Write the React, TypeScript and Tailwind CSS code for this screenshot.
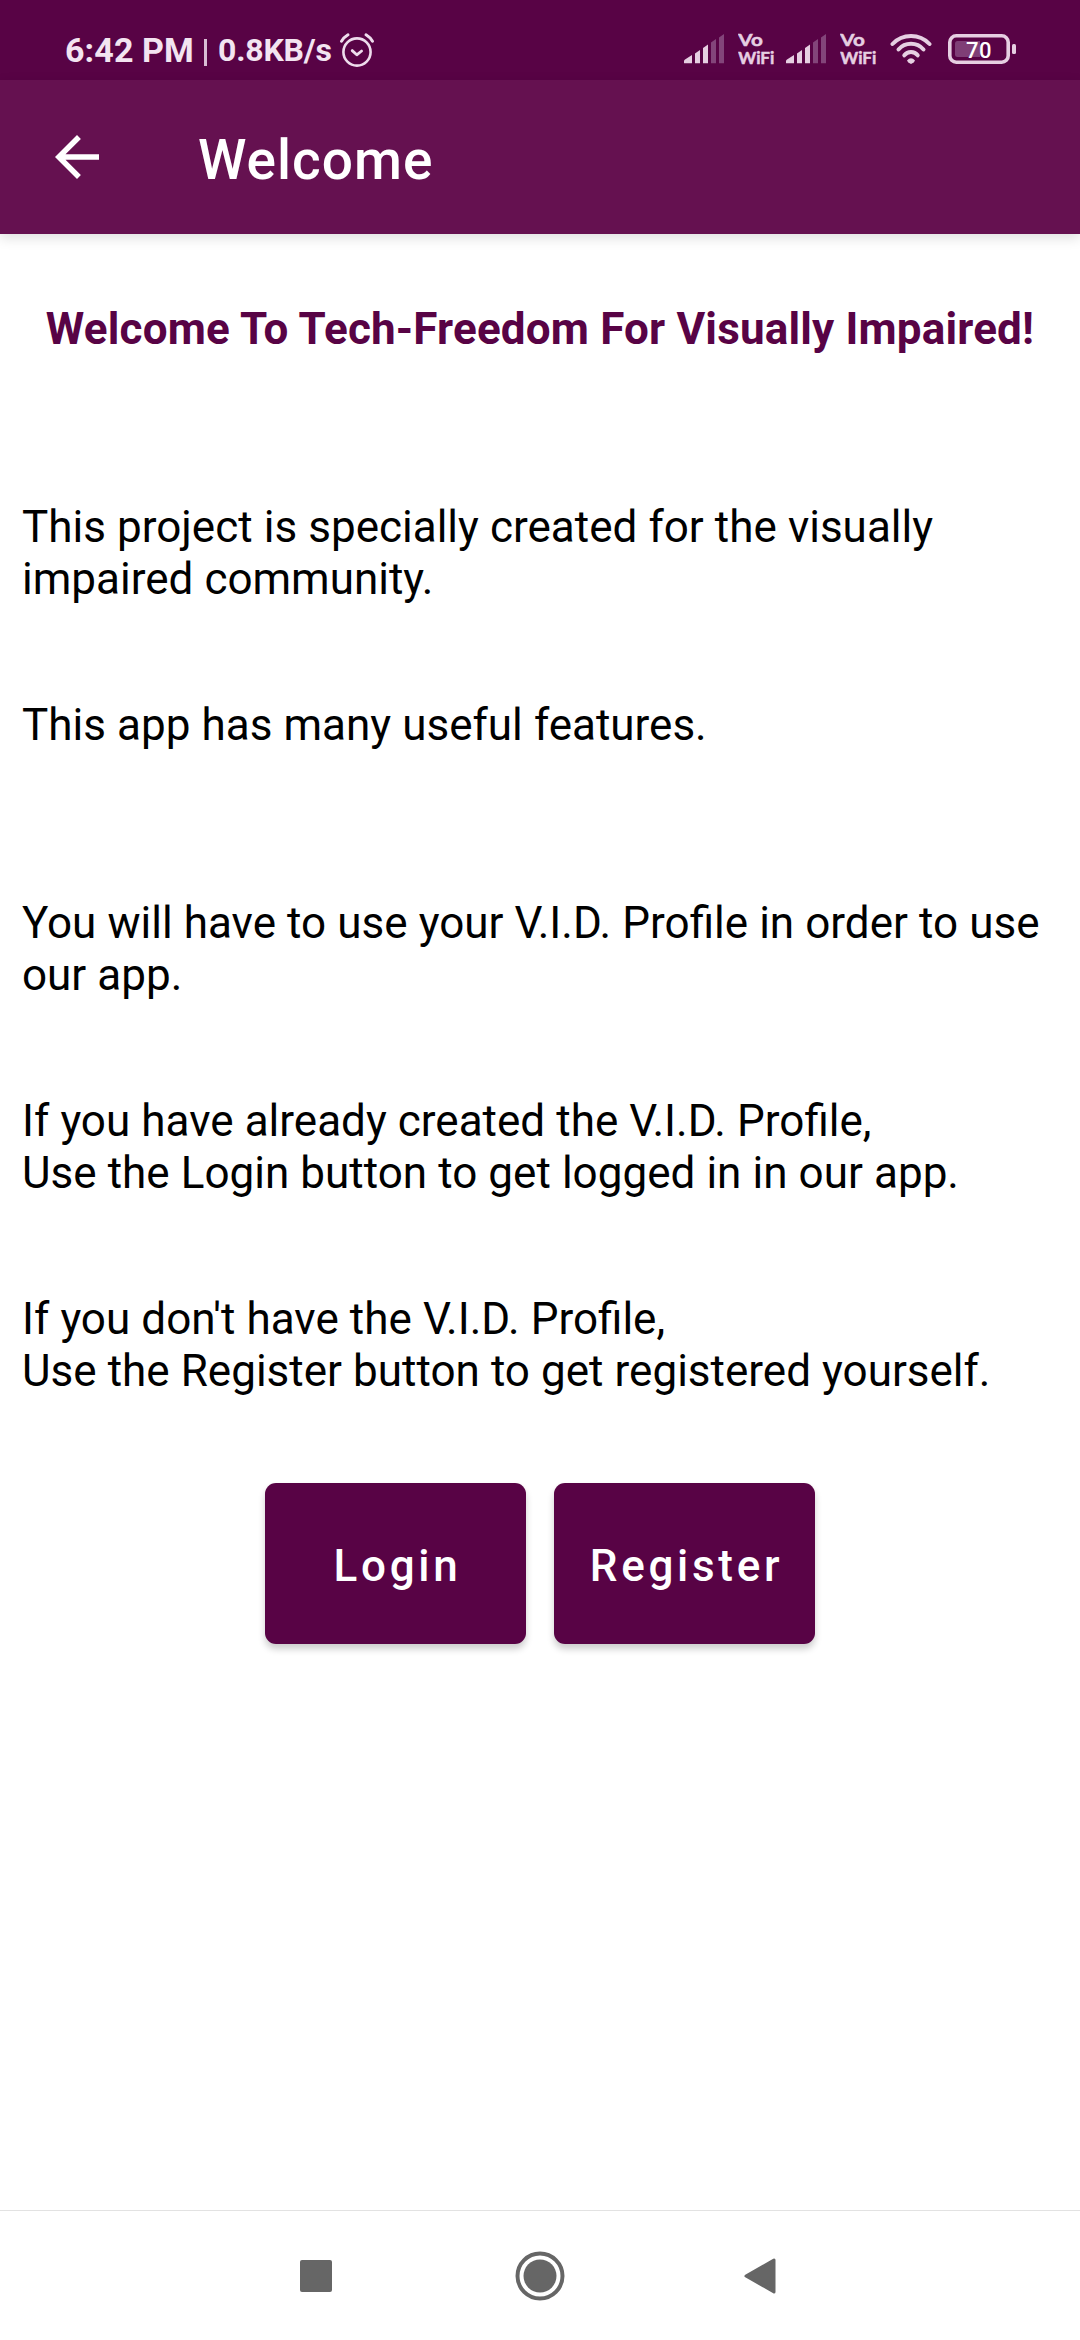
import { ReactNode } from "react";

const paragraphs: string[][] = [
  ["This project is specially created for the visually", "impaired community."],
  ["This app has many useful features."],
  ["You will have to use your V.I.D. Profile in order to use", "our app."],
  ["If you have already created the V.I.D. Profile,", "Use the Login button to get logged in in our app."],
  ["If you don't have the V.I.D. Profile,", "Use the Register button to get registered yourself."],
];

function AlarmIcon() {
  return (
    <svg width="36" height="36" viewBox="0 0 36 36" fill="none" stroke="#eedcec" strokeLinecap="round">
      <circle cx="18" cy="20" r="13.6" strokeWidth="2.6" />
      <path d="M13.2 18.6l4.6 4.2 4.8-3.8" strokeWidth="2.8" strokeLinejoin="round" />
      <path d="M2.5 9.2Q5 5.2 9 2.8M33.5 9.2Q31 5.2 27 2.8" strokeWidth="3" />
    </svg>
  );
}

function SignalIcon() {
  return (
    <svg width="40" height="30" viewBox="0 0 40 30" fill="#e6cfe2">
      <path d="M0 29v-2q0-1 1-1.6L8 21v8q0 .3-.6.3H.6Q0 29.3 0 29z" />
      <path d="M11 29.3V19.5l5-3.5v13.3h-5z" />
      <path d="M19 29.3V14l5-3.5v18.8h-5z" />
      <path d="M27 29.3V8.5L32 5v24.3h-5z" fill="#83457a" />
      <path d="M35 29.3V3.5L40 0v29.3h-5z" fill="#83457a" />
    </svg>
  );
}

function VoWifi() {
  return (
    <svg width="38" height="42" viewBox="0 -6 38 42" fill="#e6cfe2" stroke="#e6cfe2" strokeWidth="0.5" className="-mt-[6px] font-['Lato',sans-serif] font-bold">
      <text x="0.3" y="12.2" fontSize="17" textLength="24.5" lengthAdjust="spacingAndGlyphs">Vo</text>
      <text x="0.3" y="29.5" fontSize="17" textLength="36" lengthAdjust="spacingAndGlyphs">WiFi</text>
    </svg>
  );
}

function WifiIcon() {
  return (
    <svg width="42" height="30" viewBox="0 0 42 30" fill="none" stroke="#e6cfe2" strokeWidth="4" strokeLinecap="round">
      <path d="M2.5 10A25.4 25.4 0 0 1 39.5 10" />
      <path d="M8.5 15.5A16.5 16.5 0 0 1 33.5 15.5" />
      <path d="M14.3 21.3A8.5 8.5 0 0 1 27.7 21.3" />
      <path d="M17 26.5Q21 21.8 25 26.5Q24.5 28.5 21 30Q17.5 28.5 17 26.5z" fill="#e6cfe2" stroke="none" />
    </svg>
  );
}

function BatteryIcon() {
  return (
    <svg width="68" height="30" viewBox="0 0 68 30" fill="none">
      <rect x="1.8" y="1.8" width="58.4" height="26.4" rx="6.5" stroke="#e6cfe2" strokeWidth="3.6" />
      <path d="M9.5 7H32v16H9.5Q7 23 7 20.5v-11Q7 7 9.5 7z" fill="#7f3e76" />
      <rect x="64" y="10" width="4" height="10" rx="1.5" fill="#e6cfe2" />
      <text x="18" y="23.5" fontSize="22" textLength="25.5" fill="#fff" className="font-['Roboto',sans-serif] font-medium">70</text>
    </svg>
  );
}

function StatusBar() {
  return (
    <div className="flex h-20 items-start justify-between bg-[#580345] pl-[65px] pr-[64px] text-[#f3e4f1]">
      <div className="flex items-start whitespace-nowrap font-bold">
        <span className="mt-[30px] w-[139px] text-[34px] leading-10 tracking-[0.1px]">6:42 PM</span>
        <span className="mt-[39px] mr-[11px] h-[27px] w-[3px] bg-[#d9bdd5]" />
        <span className="mt-[30px] w-[121px] text-[32px] leading-10 tracking-[-0.2px]">0.8KB/s</span>
        <span className="mt-[32px]"><AlarmIcon /></span>
      </div>
      <div className="mt-[34px] flex">
        <SignalIcon />
        <span className="ml-[14px]"><VoWifi /></span>
        <span className="ml-[10px]"><SignalIcon /></span>
        <span className="ml-[14px]"><VoWifi /></span>
        <span className="ml-[12px]"><WifiIcon /></span>
        <span className="ml-[16px]"><BatteryIcon /></span>
      </div>
    </div>
  );
}

function AppButton({ children }: { children: ReactNode }) {
  return (
    <button className="h-[161px] w-[261px] rounded-[11px] bg-[#580345] pl-[4px] pt-1 text-[44px] font-medium tracking-[3.7px] text-white shadow-[0_5px_7px_rgba(0,0,0,0.2)]">
      {children}
    </button>
  );
}

export default function App() {
  return (
    <div className="flex h-[2340px] w-[1080px] flex-col bg-white font-['Roboto',sans-serif]">
      <StatusBar />

      {/* Toolbar */}
      <header className="flex h-[154px] items-center bg-[#651150] pl-11 text-white shadow-[0_4px_12px_rgba(0,0,0,0.13)]">
        <svg width="66" height="66" viewBox="0 0 24 24" fill="currentColor">
          <path d="M20 11H7.83l5.59-5.59L12 4l-8 8 8 8 1.41-1.41L7.83 13H20v-2z" />
        </svg>
        <h1 className="ml-[88px] mt-[5px] text-[55px] font-medium leading-[64px] tracking-[1px]">Welcome</h1>
      </header>

      <main className="flex-1">
        <h2 className="mt-[69px] whitespace-nowrap text-center text-[44px] font-bold leading-[52px] tracking-[0.17px] text-[#580345]">
          Welcome To Tech-Freedom For Visually Impaired!
        </h2>
        <div className="mt-[146px] px-[22px] text-black">
          {paragraphs.map((lines) => (
            <p key={lines[0]} className="h-[198px] text-[44px] leading-[52px] [word-spacing:0.2px]">
              {lines.map((line) => (
                <span key={line} className="block whitespace-nowrap">{line}</span>
              ))}
            </p>
          ))}
        </div>
        <div className="-mt-2 flex justify-center gap-7">
          <AppButton>Login</AppButton>
          <AppButton>Register</AppButton>
        </div>
      </main>

      {/* System navigation */}
      <nav className="flex h-[130px] items-center border-t border-[#e2e2e2] pl-[300px] text-[#666]">
        <span className="h-8 w-8 rounded-[2px] bg-[#666]" />
        <svg width="50" height="50" viewBox="0 0 50 50" className="ml-[183px]">
          <circle cx="25" cy="25" r="22.5" fill="none" stroke="currentColor" strokeWidth="4" />
          <circle cx="25" cy="25" r="16.5" fill="currentColor" />
        </svg>
        <svg width="32" height="36" viewBox="0 0 32 36" className="ml-[179px]">
          <path d="M2 18L30 2v32z" fill="currentColor" stroke="currentColor" strokeWidth="3" strokeLinejoin="round" />
        </svg>
      </nav>
    </div>
  );
}
